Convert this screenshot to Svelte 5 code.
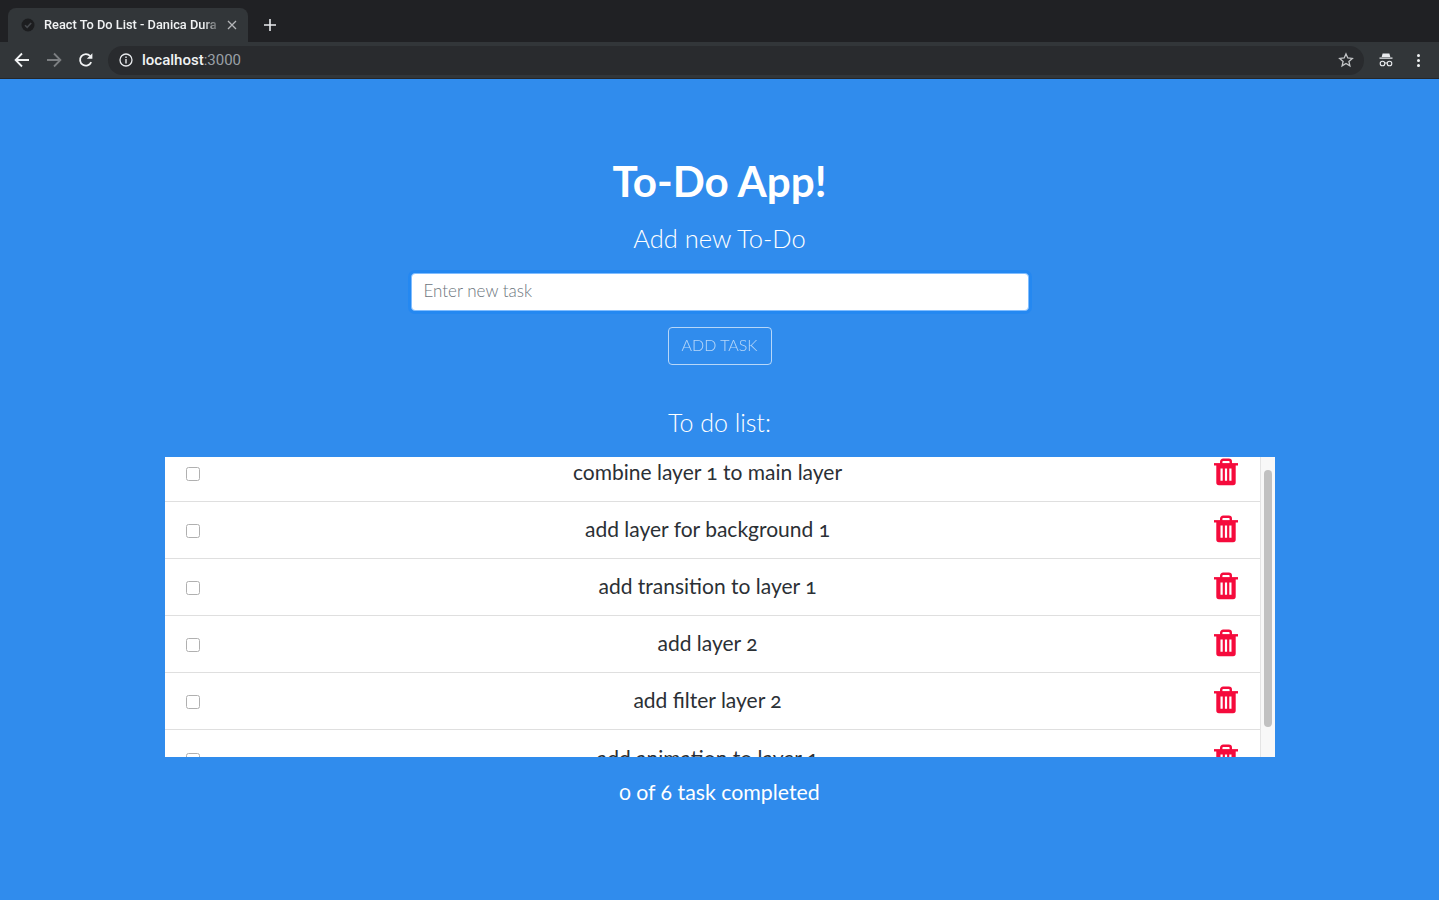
<script>
  const tasks = [
    "combine layer 1 to main layer",
    "add layer for background 1",
    "add transition to layer 1",
    "add layer 2",
    "add filter layer 2",
    "add animation to layer 1"
  ];

  let completed = $state(tasks.map(() => false));
  let done = $derived(completed.filter(Boolean).length);

  function startScrolled(el) {
    el.scrollTop = 12;
  }
</script>

<div class="browser">
  <div class="tabstrip">
    <div class="tab">
      <svg class="favicon" width="16" height="16" viewBox="0 0 16 16">
        <circle cx="8" cy="8" r="6.5" fill="#1c1d1f" />
        <path d="M5 8.2l2.2 2.2L11.2 6" fill="none" stroke="#45484c" stroke-width="1.6" />
      </svg>
      <span class="tab-title">React To Do List - Danica Dura</span>
      <svg class="tab-close" width="10" height="10" viewBox="0 0 10 10">
        <path d="M1 1l8 8M9 1l-8 8" stroke="#b4b6b8" stroke-width="1.3" />
      </svg>
    </div>
    <svg class="new-tab" width="14" height="14" viewBox="0 0 14 14">
      <path d="M7 1v12M1 7h12" stroke="#e8eaed" stroke-width="1.6" />
    </svg>
  </div>
  <div class="toolbar">
    <svg class="nav" width="16" height="16" viewBox="0 0 16 16">
      <path d="M15 8H2M8 1.5L1.6 8 8 14.5" fill="none" stroke="#f1f3f4" stroke-width="1.8" />
    </svg>
    <svg class="nav" width="16" height="16" viewBox="0 0 16 16">
      <path d="M1 8h13M8 1.5L14.4 8 8 14.5" fill="none" stroke="#7c7f82" stroke-width="1.8" />
    </svg>
    <svg class="nav" width="16" height="16" viewBox="0 0 16 16">
      <path d="M13.2 10.2A5.8 5.8 0 1 1 12.2 4" fill="none" stroke="#f1f3f4" stroke-width="1.8" />
      <path d="M14.4 1.2v5.6H8.8z" fill="#f1f3f4" />
    </svg>
    <div class="omnibox">
      <svg class="info" width="14" height="14" viewBox="0 0 14 14">
        <circle cx="7" cy="7" r="6" fill="none" stroke="#e8eaed" stroke-width="1.3" />
        <path d="M7 6v4.4M7 3.4v1.5" stroke="#e8eaed" stroke-width="1.4" />
      </svg>
      <span class="host">localhost</span><span class="port">:3000</span>
      <svg class="star" width="16" height="16" viewBox="0 0 16 16">
        <path d="M8 1.9l1.8 4.1 4.5.4-3.4 3 1 4.4L8 11.5l-3.9 2.3 1-4.4-3.4-3 4.5-.4z" fill="none" stroke="#c4c6c8" stroke-width="1.3" />
      </svg>
    </div>
    <svg class="incognito" width="16" height="16" viewBox="0 0 16 16">
      <path d="M4.6 1.5h6.8l.9 3.4H3.700zM1.500 5.600h13v1.200h-13z" fill="#e8eaed" />
      <circle cx="4.500" cy="11.500" r="2.300" fill="none" stroke="#e8eaed" stroke-width="1.100" />
      <circle cx="11.500" cy="11.500" r="2.300" fill="none" stroke="#e8eaed" stroke-width="1.100" />
      <path d="M6.800 11h2.400" stroke="#e8eaed" stroke-width="1" />
    </svg>
    <div class="menu"><i></i><i></i><i></i></div>
  </div>
</div>

<main class="page">
  <h1>To-Do App!</h1>
  <h2 class="add-title">Add new To-Do</h2>
  <input class="task-input" type="text" placeholder="Enter new task" />
  <button class="add-btn" type="button" disabled>ADD TASK</button>
  <h2 class="list-title">To do list:</h2>
  <div class="list-box">
    <ul class="list" use:startScrolled>
      {#each tasks as task, i}
        <li class="row">
          <input class="check" type="checkbox" bind:checked={completed[i]} />
          <span class="task">{task}</span>
          <svg class="trash" width="26" height="28" viewBox="0 0 26 28">
            <path d="M1 6.300h24" stroke="#f50b3c" stroke-width="2.400" />
            <path d="M8.200 6V3.800a2 2 0 0 1 2-2h5.600a2 2 0 0 1 2 2V6" fill="none" stroke="#f50b3c" stroke-width="2.400" />
            <path d="M3.300 6h19.400v18.600a2.600 2.600 0 0 1-2.600 2.600H5.900a2.600 2.600 0 0 1-2.600-2.600z" fill="#f50b3c" />
            <path d="M8.600 10.500v12.300M13 10.500v12.300M17.400 10.500v12.300" stroke="#fff" stroke-width="2.200" />
          </svg>
        </li>
      {/each}
    </ul>
    <div class="scrollbar"><div class="thumb"></div></div>
  </div>
  <p class="summary">{done} of {tasks.length} task completed</p>
</main>

<style>
  :global(body) {
    background: #308ced;
    font-family: Lato, "Open Sans", sans-serif;
  }
  .browser { background: #323639; font-family: Roboto, "Liberation Sans", sans-serif; }
  .tabstrip {
    height: 42px; background: #202124; display: flex; align-items: flex-end;
    padding-left: 8px; box-sizing: border-box;
  }
  .tab {
    width: 240px; height: 34px; background: #323639; border-radius: 8px 8px 0 0;
    display: flex; align-items: center; padding: 0 11px 0 12px; box-sizing: border-box;
  }
  .favicon { flex: none; margin-right: 8px; }
  .tab-title {
    flex: 1; font-size: 12.8px; font-weight: 500; color: #f1f3f4; white-space: nowrap; overflow: hidden;
    padding-bottom: 2px;
    -webkit-mask-image: linear-gradient(to right, #000 92%, rgba(0, 0, 0, 0.25));
    mask-image: linear-gradient(to right, #000 92%, rgba(0, 0, 0, 0.25));
  }
  .tab-close { flex: none; margin-left: 10px; }
  .new-tab { margin: 0 0 10px 15px; }
  .toolbar {
    height: 36px; border-bottom: 1px solid #25272a; display: flex; align-items: center;
    padding-left: 14px; box-sizing: content-box;
  }
  .nav { flex: none; margin-right: 16px; }
  .omnibox {
    flex: none; width: 1256px; height: 29px; margin-left: -2px; border-radius: 15px; background: #292b2e;
    display: flex; align-items: center; padding: 0 10px 0 11px; box-sizing: border-box; font-size: 15px;
  }
  .info { margin-right: 9px; }
  .host { color: #f1f3f4; font-weight: 500; }
  .port { color: #9aa0a6; }
  .star { margin-left: auto; }
  .incognito { flex: none; margin-left: 14px; }
  .menu { display: flex; flex-direction: column; gap: 2px; margin-left: 23px; }
  .menu i { width: 3px; height: 3px; background: #f1f3f4; border-radius: 50%; }

  .page {
    display: flex; flex-direction: column; align-items: center; color: #fff;
    min-height: 821px; box-sizing: border-box; padding-top: 78px;
  }
  h1 { margin: 0; font-size: 42.2px; line-height: 48px; font-weight: 700; }
  h2 { margin: 0; line-height: 29px; font-weight: 300; }
  .add-title { margin-top: 19px; font-size: 25.5px; }
  .task-input {
    margin-top: 20px; width: 618px; height: 38px; box-sizing: border-box; padding: 4px 12px 8px;
    border: 1px solid #80bdff; border-radius: 4px; background: #fff; font: inherit; font-size: 17px;
    font-weight: 300; box-shadow: 0 0 0 3px rgba(0, 123, 255, 0.25); outline: none; color: #495057;
  }
  .task-input::placeholder { color: #6c757d; opacity: 1; }
  .add-btn {
    margin-top: 16px; width: 104px; height: 38px; box-sizing: border-box; background: transparent;
    border: 1px solid #fff; border-radius: 4px; color: #fff; font: inherit; font-size: 16px; font-weight: 300;
    opacity: 0.65; padding: 0 0 4px;
  }
  .list-title { margin-top: 43px; font-size: 25px; }
  .list-box { display: flex; margin-top: 20px; width: 1110px; height: 300px; background: #fff; }
  .list {
    flex: 1; list-style: none; margin: 0; padding: 0; height: 300px;
    overflow: hidden; color: #212529;
  }
  .scrollbar {
    flex: none; width: 15px; box-sizing: border-box; background: #f8f8f8; border-left: 1px solid #e4e4e4;
    padding: 13px 3px 0 3px;
  }
  .thumb { height: 257px; background: #c1c1c1; border-radius: 4px; }
  .row {
    height: 57px; box-sizing: border-box; border-bottom: 1px solid #dfdfdf; display: flex; align-items: center;
    padding: 0 21px; position: relative;
  }
  .row:last-child { border-bottom: 0; }
  .check { width: 14px; height: 14px; margin: 2px 0 0; flex: none; appearance: none; background: #fff; border: 1px solid #b0b0b0; border-radius: 2.500px; }
  .check:checked { background: #0075ff; border-color: #0075ff; }
  .task { flex: 1; text-align: center; font-size: 21px; font-weight: 400; margin: 0 2px 3px 5px; font-variant-numeric: oldstyle-nums; color: #2b3035; }
  .trash { flex: none; margin-bottom: 2px; }
  .summary { margin: 20px 0 0; font-size: 21.3px; line-height: 30px; font-weight: 400; font-variant-numeric: oldstyle-nums; }
</style>
